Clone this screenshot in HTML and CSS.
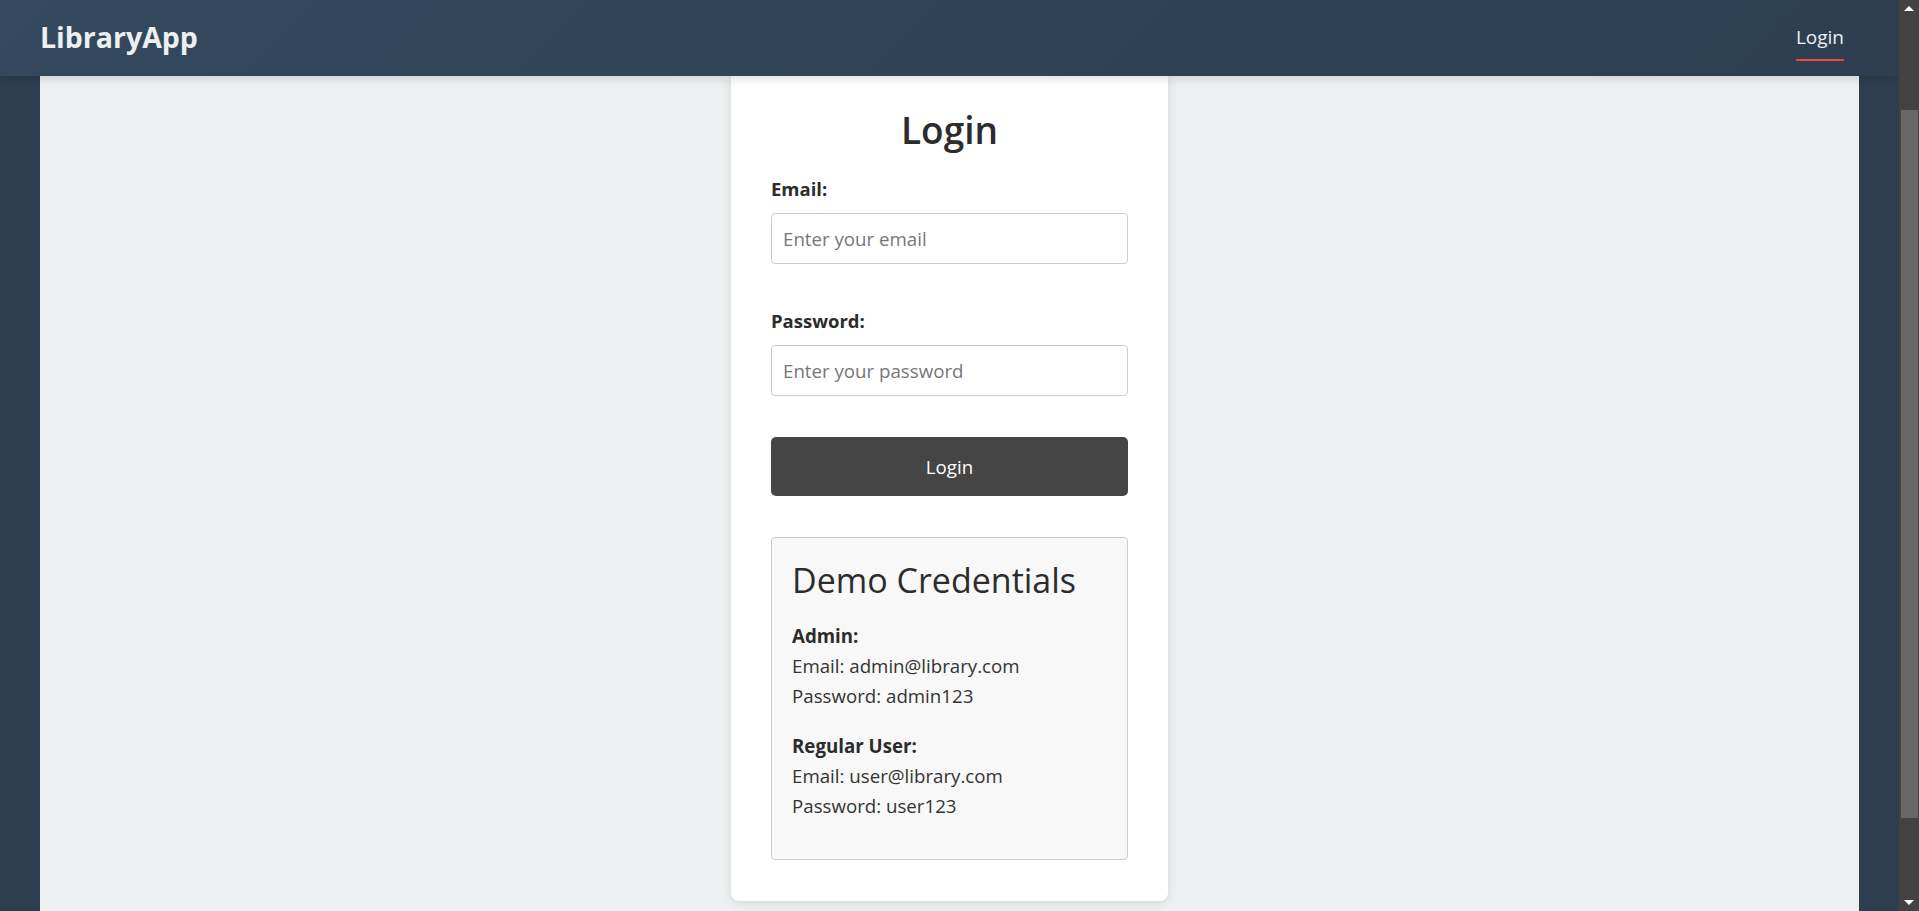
FILE: index.html
```html
<!DOCTYPE html>
<html lang="en">
<head>
<meta charset="utf-8">
<title>LibraryApp - Login</title>
<link rel="stylesheet" href="styles.css">
</head>
<body>
<div class="window">
  <div class="viewport">
    <header class="topbar">
      <div class="brand">LibraryApp</div>
      <nav class="nav">
        <a class="nav-link active" href="#"><span class="nav-text">Login</span></a>
      </nav>
    </header>
    <main class="page">
      <div class="card">
        <h2 class="title">Login</h2>
        <form class="form">
          <div class="field field-email">
            <label class="label" for="email">Email:</label>
            <input class="input" id="email" type="email" placeholder="Enter your email">
          </div>
          <div class="field field-password">
            <label class="label" for="password">Password:</label>
            <input class="input" id="password" type="password" placeholder="Enter your password">
          </div>
          <button class="btn" type="button">Login</button>
        </form>
        <div class="demo">
          <h3 class="demo-title">Demo Credentials</h3>
          <p class="demo-block"><strong>Admin:</strong><br>Email: admin@library.com<br>Password: admin123</p>
          <p class="demo-block"><strong>Regular User:</strong><br>Email: user@library.com<br>Password: user123</p>
        </div>
      </div>
    </main>
  </div>
  <div class="scrollbar">
    <div class="sb-arrow sb-up"></div>
    <div class="sb-track"><div class="sb-thumb"></div></div>
    <div class="sb-arrow sb-down"></div>
  </div>
</div>
</body>
</html>
```
FILE: styles.css
```css
html, body {
  margin: 0;
  height: 100%;
  overflow: hidden;
}
body {
  background: #2c3e50;
  font-family: "Open Sans", "Noto Sans", sans-serif;
  color: #333;
}
.window {
  display: flex;
  height: 911px;
}
.viewport {
  flex: 1;
  display: flex;
  flex-direction: column;
  overflow: hidden;
}
.topbar {
  flex: none;
  height: 76px;
  box-sizing: border-box;
  padding: 0 40px;
  display: flex;
  align-items: center;
  justify-content: space-between;
  background: linear-gradient(135deg, #34495e, #2c3e50);
  box-shadow: 0 2px 10px rgba(0, 0, 0, 0.15);
  position: relative;
  z-index: 2;
}
.brand {
  color: #ecf0f1;
  font-size: 28.5px;
  font-weight: 700;
  margin-top: -2px;
}
.nav-link {
  color: #ecf0f1;
  text-decoration: none;
  padding: 0 15px;
  font-size: 19px;
}
.nav-text {
  display: inline-block;
  padding-top: 8px;
  padding-bottom: 9px;
  border-bottom: 2.5px solid #e74c3c;
}
.page {
  flex: 1;
  margin: 0 40px;
  background: #ecf0f1;
  display: flex;
  justify-content: center;
  align-items: flex-start;
}
.card {
  width: 357px;
  padding: 31px 40px 41px;
  background: #fff;
  border-radius: 0 0 8px 8px;
  box-shadow: 0 2px 10px rgba(0, 0, 0, 0.1);
}
.title {
  margin: 0 0 24px;
  text-align: center;
  font-size: 37px;
  line-height: 46px;
  font-weight: 600;
  color: #2c2c2c;
}
.form {
  display: flex;
  flex-direction: column;
}
.field {
  display: flex;
  flex-direction: column;
}
.field-email {
  margin-bottom: 45px;
}
.field-password {
  margin-bottom: 41px;
}
.label {
  font-size: 18.5px;
  font-weight: 700;
  line-height: 24px;
  margin-bottom: 12px;
  color: #2c2c2c;
}
.input {
  height: 51px;
  box-sizing: border-box;
  padding: 0 11px;
  border: 1px solid #ccc;
  border-radius: 4px;
  font-family: inherit;
  font-size: 18.7px;
  color: #333;
}
.input::placeholder {
  color: #777;
}
.btn {
  height: 59px;
  border: none;
  border-radius: 5px;
  background: #454545;
  color: #fff;
  font-family: inherit;
  font-size: 18.7px;
}
.demo {
  margin-top: 41px;
  padding: 20px 20px 38px;
  background: #f8f8f8;
  border: 1px solid #ccc;
  border-radius: 4px;
}
.demo-title {
  margin: 0 0 19px;
  font-size: 34px;
  line-height: 44px;
  font-weight: 500;
  color: #2c2c2c;
}
.demo-block {
  margin: 0 0 20px;
  font-size: 18.7px;
  line-height: 30px;
  color: #333;
}
.demo-block:last-child {
  margin-bottom: 0;
}
.demo-block strong {
  color: #2c2c2c;
}
.scrollbar {
  width: 20px;
  flex: none;
  background: #424242;
  display: flex;
  flex-direction: column;
}
.sb-arrow {
  height: 17px;
  flex: none;
  display: flex;
  align-items: center;
  justify-content: center;
}
.sb-arrow::before {
  content: "";
  width: 0;
  height: 0;
  border-left: 5px solid transparent;
  border-right: 5px solid transparent;
}
.sb-up::before {
  border-bottom: 5px solid #fff;
}
.sb-down::before {
  border-top: 5px solid #fff;
}
.sb-track {
  flex: 1;
  padding: 93px 1px 76px 2px;
  display: flex;
}
.sb-thumb {
  flex: 1;
  background: #686868;
}
```
